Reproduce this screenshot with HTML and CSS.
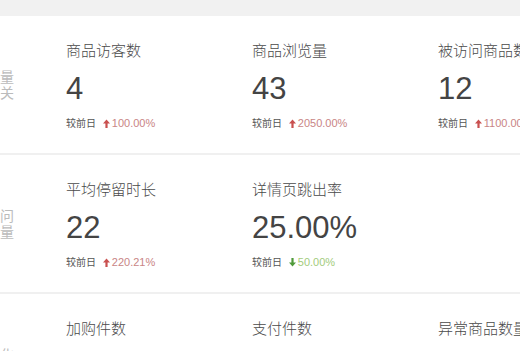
FILE: index.html
```html
<!DOCTYPE html>
<html>
    <head>
        <meta charset="utf-8">
        <link rel="stylesheet" href="styles.css">
    </head>
    <body>
        <div class="statPanel">
            <div class="statRow">
                <div class="statGroup">流量<br>相关</div>
                <div class="statCells">
                    <div class="statCell">
                        <div class="statTitle">商品访客数</div>
                        <div class="statValue">4</div>
                        <div class="statCompare">较前日 <span class="trend up"><svg width="7" height="9" viewBox="0 0 7 9"><path d="M3.5 0.5 L7 4.5 L4.6 4.5 L4.6 9 L2.4 9 L2.4 4.5 L0 4.5 Z"/></svg>100.00%</span></div>
                    </div>
                    <div class="statCell">
                        <div class="statTitle">商品浏览量</div>
                        <div class="statValue">43</div>
                        <div class="statCompare">较前日 <span class="trend up"><svg width="7" height="9" viewBox="0 0 7 9"><path d="M3.5 0.5 L7 4.5 L4.6 4.5 L4.6 9 L2.4 9 L2.4 4.5 L0 4.5 Z"/></svg>2050.00%</span></div>
                    </div>
                    <div class="statCell">
                        <div class="statTitle">被访问商品数</div>
                        <div class="statValue">12</div>
                        <div class="statCompare">较前日 <span class="trend up"><svg width="7" height="9" viewBox="0 0 7 9"><path d="M3.5 0.5 L7 4.5 L4.6 4.5 L4.6 9 L2.4 9 L2.4 4.5 L0 4.5 Z"/></svg>1100.00%</span></div>
                    </div>
                </div>
            </div>
            <div class="statRow">
                <div class="statGroup">访问<br>质量</div>
                <div class="statCells">
                    <div class="statCell">
                        <div class="statTitle">平均停留时长</div>
                        <div class="statValue">22</div>
                        <div class="statCompare">较前日 <span class="trend up"><svg width="7" height="9" viewBox="0 0 7 9"><path d="M3.5 0.5 L7 4.5 L4.6 4.5 L4.6 9 L2.4 9 L2.4 4.5 L0 4.5 Z"/></svg>220.21%</span></div>
                    </div>
                    <div class="statCell">
                        <div class="statTitle">详情页跳出率</div>
                        <div class="statValue">25.00%</div>
                        <div class="statCompare">较前日 <span class="trend down"><svg width="7" height="9" viewBox="0 0 7 9"><path d="M3.5 8.5 L7 4.5 L4.6 4.5 L4.6 0 L2.4 0 L2.4 4.5 L0 4.5 Z"/></svg>50.00%</span></div>
                    </div>
                    <div class="statCell"></div>
                </div>
            </div>
            <div class="statRow">
                <div class="statGroup">转化<br>相关</div>
                <div class="statCells">
                    <div class="statCell">
                        <div class="statTitle">加购件数</div>
                    </div>
                    <div class="statCell">
                        <div class="statTitle">支付件数</div>
                    </div>
                    <div class="statCell">
                        <div class="statTitle">异常商品数量</div>
                    </div>
                </div>
            </div>
        </div>
    </body>
</html>
```

FILE: styles.css
```css
html, body {
  margin: 0;
  overflow: hidden;
  background: #f1f1f1;
  font-family: "Liberation Sans", "Noto Sans CJK SC", sans-serif;
}
.statPanel {
  margin: 16px 0 0 -46px;
  background: #ffffff;
}
.statRow {
  display: flex;
  height: 137px;
  border-bottom: 2px solid #f0f0f0;
}
.statGroup {
  width: 60px;
  flex: none;
  align-self: center;
  text-align: right;
  font-size: 14px;
  line-height: 16px;
  color: #bbbbbb;
}
.statCells {
  display: grid;
  grid-template-columns: 186px 186px 186px;
  padding: 25px 0 0 52px;
}
.statCell {
  white-space: nowrap;
}
.statTitle {
  font-size: 15px;
  font-weight: 300;
  line-height: 20px;
  color: #4a4a4a;
}
.statValue {
  margin-top: 10px;
  font-size: 31px;
  line-height: 36px;
  color: #444444;
}
.statCompare {
  margin-top: 9px;
  font-size: 10px;
  line-height: 14px;
  color: #555555;
}
.trend {
  margin-left: 4px;
  font-size: 11px;
}
.trend svg {
  margin-right: 2px;
  vertical-align: -1px;
}
.trend.up { color: #c98585; }
.trend.up svg { fill: #c9504f; }
.trend.down { color: #a3cc7c; }
.trend.down svg { fill: #4f9a3a; }
```
